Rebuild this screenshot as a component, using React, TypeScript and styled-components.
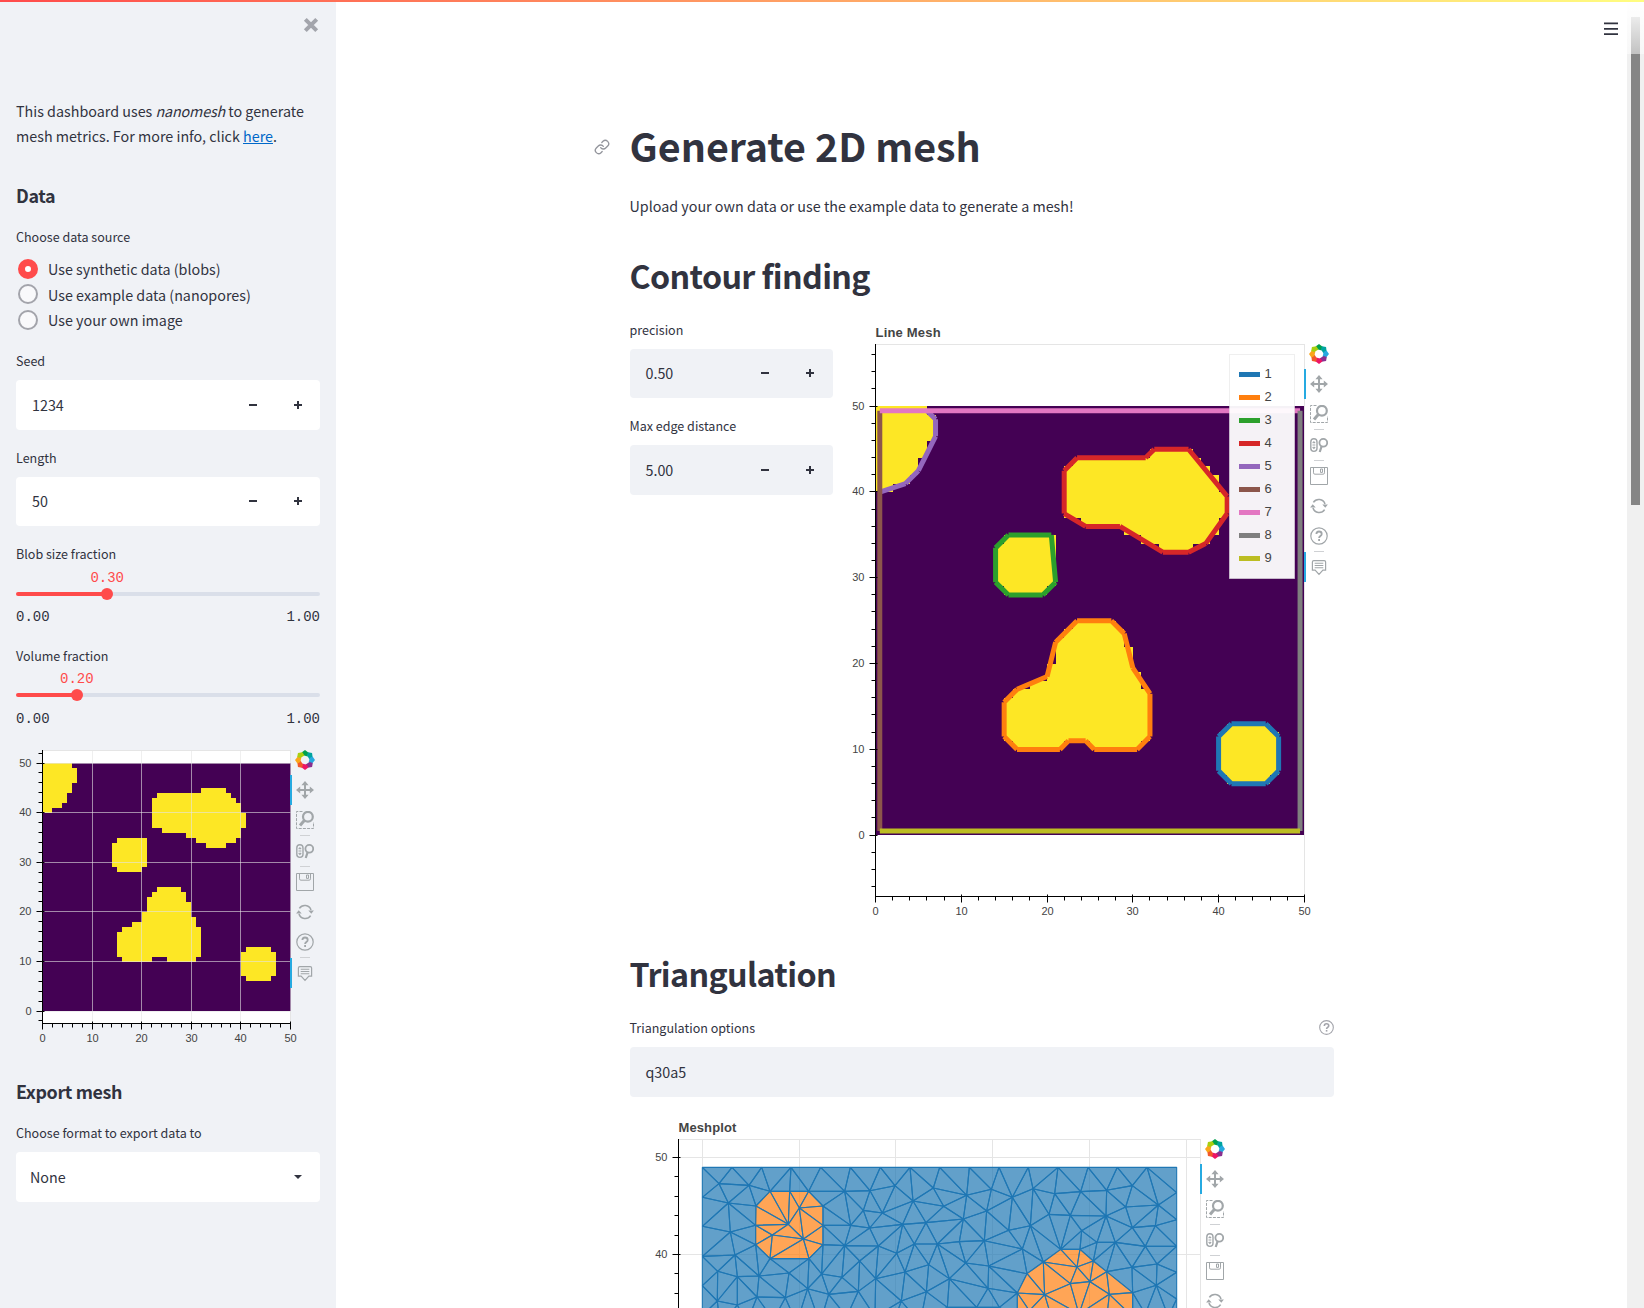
import React from "react";
import styled, { createGlobalStyle } from "styled-components";

const GlobalStyle = createGlobalStyle`
  *, *::before, *::after { box-sizing: border-box; }
  body {
    margin: 0;
    background: #fff;
    color: #31333f;
    font-family: "Noto Sans CJK SC", "Noto Sans", sans-serif;
    font-size: 14.32px;
    line-height: 25px;
  }
`;

const Page = styled.div`
  position: relative;
  display: flex;
  width: 1644px;
  height: 1308px;
  overflow: hidden;
`;

const Decoration = styled.div`
  position: absolute;
  inset: 0 0 auto 0;
  height: 2px;
  z-index: 3;
  background: linear-gradient(90deg, #ff4b4b, #fffd80);
`;

const Sidebar = styled.aside`
  flex: 0 0 336px;
  padding: 17px 16px 0;
  background: #f0f2f6;
`;

const CloseRow = styled.div`
  display: flex;
  justify-content: flex-end;
  height: 81px;
  padding-right: 1px;
`;

const Paragraph = styled.p<{ $gap?: number }>`
  margin: ${(p) => p.$gap ?? 0}px 0 0;
`;

const Line = styled.span`
  display: block;
  white-space: nowrap;
`;

const Link = styled.a`
  color: #0068c9;
  text-decoration: underline;
  text-underline-offset: 1px;
`;

const Emph = styled.em`
  font-style: italic;
  letter-spacing: -0.15px;
`;

const SideHeading = styled.h2<{ $gap: number }>`
  margin: ${(p) => p.$gap}px 0 0;
  font-size: 17.9px;
  line-height: 24px;
  font-weight: 700;
  letter-spacing: -0.38px;
`;

const Label = styled.div<{ $gap: number }>`
  display: flex;
  justify-content: space-between;
  align-items: center;
  margin-top: ${(p) => p.$gap}px;
  height: 20px;
  font-size: 12.54px;
  line-height: 20px;
`;

const RadioGroup = styled.div`
  margin-top: 9.1px;
`;

const RadioRow = styled.label`
  display: flex;
  align-items: center;
  gap: 10px;
  height: 25.5px;
  padding-left: 2px;
`;

const RadioMark = styled.span<{ $on?: boolean }>`
  width: 20px;
  height: 20px;
  border-radius: 50%;
  border: ${(p) => (p.$on ? "7px solid #ff4b4b" : "2px solid #a3a4ab")};
  background: ${(p) => (p.$on ? "#fff" : "#f9f9fb")};
`;

const Control = styled.div<{ $bg: string; $tall?: boolean; $indent?: number }>`
  display: flex;
  align-items: center;
  margin-top: 9px;
  height: ${(p) => (p.$tall ? 50 : 49)}px;
  padding-left: ${(p) => p.$indent ?? 16}px;
  padding-bottom: ${(p) => (p.$tall ? 0 : 1)}px;
  border-radius: 4px;
  background: ${(p) => p.$bg};
`;

const ControlText = styled.span`
  flex: 1;
`;

const StepButton = styled.span`
  display: flex;
  align-items: center;
  justify-content: center;
  width: 45px;
  height: 100%;
`;

const SliderBox = styled.div<{ $lift: number }>`
  height: 62px;
  margin-top: ${(p) => -p.$lift}px;
  padding-top: 4px;
  font-family: "Liberation Mono", monospace;
  font-size: 14px;
  line-height: 20px;
`;

const SliderValue = styled.div`
  width: 34px;
  transform: translateX(-50%);
  text-align: center;
  color: #ff4b4b;
`;

const Track = styled.div`
  display: flex;
  align-items: center;
  height: 12px;
`;

const TrackPart = styled.div<{ $on?: boolean }>`
  height: 4px;
  flex: ${(p) => (p.$on ? "none" : "1")};
  border-radius: ${(p) => (p.$on ? "2px 0 0 2px" : "0 2px 2px 0")};
  background: ${(p) => (p.$on ? "#ff4b4b" : "#dadfe9")};
`;

const Thumb = styled.div`
  width: 12px;
  height: 12px;
  margin: 0 -6px;
  z-index: 1;
  border-radius: 50%;
  background: #ff4b4b;
`;

const SliderEnds = styled.div<{ $gap: number }>`
  display: flex;
  justify-content: space-between;
  margin-top: ${(p) => p.$gap}px;
`;

const Main = styled.main`
  flex: 1;
  display: flex;
  justify-content: center;
`;

const Block = styled.div`
  width: 704px;
  padding-top: 112px;
`;

const TitleRow = styled.div`
  display: flex;
  align-items: center;
  height: 66px;
  margin-left: -36px;
  gap: 20px;
`;

const AnchorIcon = styled.span`
  display: flex;
  padding-top: 3px;
`;

const Title = styled.h1`
  margin: 0;
  font-size: 39.4px;
  line-height: 66px;
  font-weight: 700;
`;

const Heading = styled.h2<{ $gap: number }>`
  margin: ${(p) => p.$gap}px 0 0;
  font-size: 32.25px;
  line-height: 44px;
  font-weight: 700;
  letter-spacing: -0.64px;
`;

const Columns = styled.div`
  display: flex;
  gap: 16.5px;
  height: 626px;
`;

const Column = styled.div<{ $w: number }>`
  flex: none;
  width: ${(p) => p.$w}px;
`;

const PlotRow = styled.div<{ $gap?: number; $indent?: number }>`
  display: flex;
  align-items: flex-start;
  margin-top: ${(p) => p.$gap ?? 0}px;
  padding-left: ${(p) => p.$indent ?? 0}px;
`;

const PlotSvg = styled.svg`
  display: block;
  flex: none;
  overflow: visible;
  font-family: "Liberation Sans", Arial, sans-serif;
  fill: #444;
`;

const Toolbar = styled.div<{ $gap: number }>`
  display: flex;
  flex-direction: column;
  align-items: center;
  width: 30px;
  margin-top: ${(p) => p.$gap}px;
`;

const Tool = styled.span<{ $active?: boolean }>`
  display: flex;
  align-items: center;
  justify-content: center;
  width: 30px;
  height: 30px;
  padding-right: 2px;
  border-left: 2px solid ${(p) => (p.$active ? "#26aae1" : "transparent")};
`;

const Divider = styled.span`
  width: 10px;
  height: 1px;
  background: #cfd1d4;
`;

const Header = styled.header`
  position: absolute;
  top: 0;
  right: 0;
  left: 336px;
  height: 54px;
  z-index: 2;
  display: flex;
  justify-content: flex-end;
  padding: 22px 26px 0 0;
  background: linear-gradient(rgba(255, 255, 255, 1), rgba(255, 255, 255, 0.5));
`;

const ScrollTrack = styled.div`
  flex: 0 0 17px;
  padding: 17px 4px 0;
  background: #f0f0f0;
`;

const ScrollThumb = styled.div`
  height: 488px;
  background: #858585;
`;

/* ---------- icons ---------- */

const GREY = "#a1a6a9";

function BokehLogo() {
  const colors = ["#00a04e", "#00a4a0", "#26a9e0", "#8a2f8f", "#ed1566", "#f2592a", "#faa61a", "#a9cf0f"];
  return (
    <svg width="20" height="20" viewBox="-10 -10 20 20">
      {colors.map((c, i) => (
        <polygon key={c} points="-3.4,-7.6 0,-10 3.6,-7.2 2.8,-3.6 -1.9,-4.7" fill={c} transform={`rotate(${i * 45})`} />
      ))}
    </svg>
  );
}

function PanIcon() {
  return (
    <svg width="18" height="18" viewBox="0 0 18 18" fill={GREY}>
      <path d="M8 4h2v4h4v2h-4v4H8v-4H4V8h4z" />
      <path d="M9 0l3.6 4.2H5.4zM9 18l3.6-4.2H5.4zM0 9l4.2-3.6v7.2zM18 9l-4.2-3.6v7.2z" />
    </svg>
  );
}

function BoxZoomIcon() {
  return (
    <svg width="18" height="18" viewBox="0 0 18 18" fill="none" stroke={GREY}>
      <path d="M6.500 .5H.5v17h17V11" strokeDasharray="3 1.2" />
      <circle cx="11.900" cy="5.800" r="4.900" strokeWidth="2.200" />
      <path d="M8.500 9.300l-4.500 5.200" strokeWidth="3" />
    </svg>
  );
}

function WheelIcon() {
  return (
    <svg width="18" height="18" viewBox="0 0 18 18" fill="none" stroke={GREY} strokeWidth="1.4">
      <rect x=".8" y="2.800" width="6.200" height="12.600" rx="3.100" />
      <path d="M2.700 7.100l1.200-1.300 1.200 1.300M2.700 11l1.200 1.300L5.100 11M2.500 9h2.800" strokeWidth="1.200" />
      <circle cx="13.300" cy="6.800" r="3.900" strokeWidth="1.800" />
      <path d="M11.700 10.200l-2 5.800" strokeWidth="2.200" />
    </svg>
  );
}

function SaveIcon() {
  return (
    <svg width="18" height="18" viewBox="0 0 18 18" fill="none" stroke={GREY}>
      <path d="M.5.5h17v17H.5z" />
      <path d="M3.500 .5v5.300q0 1.400 1.400 1.400h8.200q1.400 0 1.400-1.400V.5" />
      <path d="M10.500 2h2v3.400h-2z" />
    </svg>
  );
}

function ResetIcon() {
  return (
    <svg width="18" height="18" viewBox="0 0 18 18" fill="none" stroke={GREY} strokeWidth="1.6">
      <path d="M3.400 5.400A6.500 6.500 0 0 1 15 7M14.600 12.600A6.500 6.500 0 0 1 3 11" />
      <path d="M12.300 7.400h5.600l-2.600 3.400zM.1 10.600h5.600L2.700 7.200z" fill={GREY} stroke="none" />
    </svg>
  );
}

function HelpIcon({ size = 18, color = GREY, weight = 1.2 }: { size?: number; color?: string; weight?: number }) {
  return (
    <svg width={size} height={size} viewBox="0 0 18 18" fill="none" stroke={color} strokeWidth={weight}>
      <circle cx="9" cy="9" r="8.200" />
      <path d="M6.400 7.100C6.400 5.300 7.500 4.500 9 4.500s2.700 .9 2.700 2.400c0 2-2.600 2.100-2.600 4" strokeWidth={weight + 0.6} />
      <path d="M9.100 12v1.900" strokeWidth={weight + 0.6} />
    </svg>
  );
}

function HoverIcon() {
  return (
    <svg width="18" height="18" viewBox="0 -0.6 18 18" fill="none" stroke={GREY} strokeWidth="1.2">
      <path d="M3.800 2h10.400q1.400 0 1.400 1.400v8.100h-2.700L9 15.800l-3.900-4.300H2.400V3.400Q2.400 2 3.800 2z" />
      <path d="M4.700 4.600h8.600M4.700 6.900h8.600M4.700 9.200h8.600" strokeWidth="1.100" />
    </svg>
  );
}

function LinkIcon() {
  return (
    <svg width="16" height="16" viewBox="0 0 24 24" fill="none" stroke="#93959c" strokeWidth="2" strokeLinecap="round" strokeLinejoin="round">
      <path d="M10 13a5 5 0 0 0 7.540 .54l3-3a5 5 0 0 0-7.070-7.070l-1.720 1.710" />
      <path d="M14 11a5 5 0 0 0-7.540-.54l-3 3a5 5 0 0 0 7.070 7.070l1.710-1.710" />
    </svg>
  );
}

function CloseIcon() {
  return (
    <svg width="16" height="16" viewBox="0 0 16 16" stroke="#a3a5ac" strokeWidth="4">
      <path d="M2.300 2.300l11.400 11.400M13.700 2.300L2.300 13.700" />
    </svg>
  );
}

function BurgerIcon() {
  return (
    <svg width="14" height="13" viewBox="0 0 14 13" fill="#31333f">
      <path d="M0 .6h14v1.700H0zM0 6h14v1.700H0zM0 11.300h14V13H0z" />
    </svg>
  );
}

function Sign({ plus }: { plus?: boolean }) {
  return (
    <svg width="8" height="8" viewBox="0 0 8 8" fill="#31333f">
      <path d={plus ? "M3 0v3H0v2h3v3h2V5h3V3H5V0z" : "M0 3h8v2H0z"} />
    </svg>
  );
}

function BokehToolbar({ gap }: { gap: number }) {
  return (
    <Toolbar $gap={gap}>
      <Tool><BokehLogo /></Tool>
      <Tool $active><PanIcon /></Tool>
      <Tool><BoxZoomIcon /></Tool>
      <Divider />
      <Tool><WheelIcon /></Tool>
      <Divider />
      <Tool><SaveIcon /></Tool>
      <Tool><ResetIcon /></Tool>
      <Tool><HelpIcon /></Tool>
      <Divider />
      <Tool $active><HoverIcon /></Tool>
    </Toolbar>
  );
}

/* ---------- plot data ---------- */

const PURPLE = "#440154";
const YELLOW = "#fde725";

const BLOBS = [
  "0,50 6,50 6,49 7,49 7,46 6,46 6,44 5,44 5,42 4,42 4,41 2,41 2,40 0,40",
  "23,44 32,44 32,45 37,45 37,44 38,44 38,43 39,43 39,42 40,42 40,40 41,40 41,37 40,37 40,35 39,35 39,34 37,34 37,33 33,33 33,34 31,34 31,35 29,35 29,36 24,36 24,37 22,37 22,43 23,43",
  "15,35 21,35 21,29 20,29 20,28 15,28 15,29 14,29 14,34 15,34",
  "23,25 28,25 28,24 29,24 29,22 30,22 30,19 31,19 31,17 32,17 32,11 31,11 31,10 25,10 25,11 22,11 22,10 16,10 16,11 15,11 15,16 16,16 16,17 18,17 18,18 20,18 20,20 21,20 21,23 22,23 22,24 23,24",
  "41,13 46,13 46,12 47,12 47,7 46,7 46,6 41,6 41,7 40,7 40,12 41,12",
];

type Pt = [number, number];

const CONTOURS: { color: string; closed?: boolean; pts: Pt[] }[] = [
  { color: "#1f77b4", closed: true, pts: [[41.5, 13], [45.5, 13], [47, 11.5], [47, 7.5], [45.5, 6], [41.5, 6], [40, 7.5], [40, 11.5]] },
  { color: "#ff7f0e", closed: true, pts: [[23.5, 25], [27.5, 25], [29, 23.5], [30, 19.5], [32, 16.5], [32, 11.5], [30.5, 10], [25.5, 10], [24.5, 11], [22.5, 11], [21.5, 10], [16.5, 10], [15, 11.5], [15, 15.5], [16.5, 17], [20, 18.5], [21, 22.5]] },
  { color: "#2ca02c", closed: true, pts: [[15.5, 35], [20.5, 35], [21, 29.5], [19.5, 28], [15.5, 28], [14, 29.5], [14, 33.5]] },
  { color: "#d62728", closed: true, pts: [[23.5, 44], [31.5, 44], [32.5, 45], [36.5, 45], [41, 39.5], [41, 37.5], [38.5, 34], [36.5, 33], [33.5, 33], [28.5, 36], [24.5, 36], [22, 37.5], [22, 42.5]] },
  { color: "#9467bd", pts: [[6, 49.5], [7, 48.5], [7, 46.5], [5, 42.5], [3.5, 41], [0.5, 40]] },
  { color: "#8c564b", pts: [[0.5, 49.5], [0.5, 0.5]] },
  { color: "#e377c2", pts: [[0.5, 49.5], [49.5, 49.5]] },
  { color: "#7f7f7f", pts: [[49.5, 49.5], [49.5, 0.5]] },
  { color: "#bcbd22", pts: [[0.5, 0.5], [49.5, 0.5]] },
];

/* Mesh nodes in thirds of a pixel from the plot's own origin corner. */
const NODES: Pt[] = [
  [187, 172], [276, 172], [365, 172], [453, 172], [542, 172], [631, 172], [721, 172], [810, 172], [899, 172], [988, 172],
  [1077, 172], [1165, 172], [1254, 172], [1344, 172], [1432, 172], [1521, 172], [1610, 172],
  [187, 262], [187, 349], [187, 439], [187, 527], [187, 616],
  [237, 221], [327, 226], [390, 244], [449, 244], [506, 244], [348, 288], [265, 279], [347, 346], [271, 366], [347, 404],
  [285, 435], [390, 446], [507, 446], [549, 288], [549, 346], [549, 404], [445, 343], [478, 294], [490, 387], [397, 375],
  [614, 244], [690, 242], [765, 227], [880, 234], [670, 301], [727, 309], [819, 273], [911, 289], [632, 346], [689, 354],
  [788, 343], [858, 338], [614, 407], [715, 408], [823, 402], [892, 402], [770, 430], [659, 453], [866, 464], [795, 486],
  [707, 506], [606, 502], [545, 492], [447, 489], [503, 536], [357, 498], [292, 500], [233, 484], [232, 573], [292, 585],
  [351, 561], [436, 563], [566, 553], [655, 544], [784, 573], [859, 545], [928, 506],
  [980, 256], [1054, 238], [1117, 262], [1179, 236], [1244, 251], [1322, 245], [1400, 241], [1477, 227], [1610, 248],
  [1555, 285], [1610, 329], [1457, 291], [1040, 303], [970, 327], [1227, 313], [1291, 316], [1398, 318], [1477, 353],
  [1546, 347], [1171, 347], [1106, 361], [1325, 362], [1033, 392], [958, 395], [1147, 417], [1262, 418], [1320, 418],
  [1371, 397], [1426, 397], [1516, 409], [1610, 409], [1210, 456], [1360, 453], [1311, 471], [977, 459], [1046, 468],
  [1161, 491], [1400, 485], [1476, 472], [1551, 462], [1610, 487], [1044, 535], [1132, 549], [1214, 554],
  [1291, 521], [1350, 515], [1408, 553], [1478, 548], [1549, 526], [1610, 567], [922, 592], [1010, 592], [1078, 592],
  [1132, 625], [1168, 602], [1317, 612], [1478, 620], [1516, 612], [1585, 620], [1610, 648], [1400, 628], [1240, 640],
  [240, 650], [320, 640], [400, 630], [470, 640], [540, 640], [620, 620], [705, 620], [760, 640], [840, 640], [960, 660], [1050, 660],
];

const OCTAGON: Pt[] = [[390, 244], [506, 244], [549, 288], [549, 404], [507, 446], [390, 446], [347, 404], [348, 288]];
const DOME: Pt[] = [[1262, 418], [1320, 418], [1360, 453], [1400, 485], [1478, 548], [1478, 700], [1132, 700], [1132, 549], [1161, 491], [1210, 456]];

function inside(x: number, y: number, poly: Pt[]) {
  let hit = false;
  for (let i = 0, j = poly.length - 1; i < poly.length; j = i++) {
    const [xi, yi] = poly[i];
    const [xj, yj] = poly[j];
    if (yi > y !== yj > y && x < ((xj - xi) * (y - yi)) / (yj - yi) + xi) hit = !hit;
  }
  return hit;
}

const side = (a: Pt, b: Pt, c: Pt) => Math.sign((b[0] - a[0]) * (c[1] - a[1]) - (b[1] - a[1]) * (c[0] - a[0]));

/* Swap the diagonal of the two triangles that a required edge cuts through. */
function forceEdge(tris: Pt[][], a: Pt, b: Pt): Pt[][] {
  const same = (p: Pt, q: Pt) => p[0] === q[0] && p[1] === q[1];
  for (const t of tris) {
    if (!t.some((p) => same(p, a))) continue;
    const [c, d] = t.filter((p) => !same(p, a));
    if (same(c, b) || same(d, b)) continue;
    const other = tris.find((u) => u !== t && [b, c, d].every((q) => u.some((p) => same(p, q))));
    if (!other) continue;
    if (side(a, b, c) * side(a, b, d) < 0 && side(c, d, a) * side(c, d, b) < 0) {
      return [...tris.filter((u) => u !== t && u !== other), [a, b, c], [a, b, d]];
    }
  }
  return tris;
}

/* Bowyer-Watson triangulation. */
function triangulate(pts: Pt[]): Pt[][] {
  const n = pts.length;
  const all: Pt[] = [...pts, [-90000, -80000], [95000, -80000], [900, 120000]];
  type Tri = { v: number[]; cx: number; cy: number; r: number };
  const make = (a: number, b: number, c: number): Tri => {
    const [ax, ay] = all[a];
    const [bx, by] = all[b];
    const [qx, qy] = all[c];
    const d = 2 * (ax * (by - qy) + bx * (qy - ay) + qx * (ay - by)) || 1e-9;
    const cx = ((ax * ax + ay * ay) * (by - qy) + (bx * bx + by * by) * (qy - ay) + (qx * qx + qy * qy) * (ay - by)) / d;
    const cy = ((ax * ax + ay * ay) * (qx - bx) + (bx * bx + by * by) * (ax - qx) + (qx * qx + qy * qy) * (bx - ax)) / d;
    return { v: [a, b, c], cx, cy, r: (ax - cx) ** 2 + (ay - cy) ** 2 };
  };
  let tris: Tri[] = [make(n, n + 1, n + 2)];
  for (let i = 0; i < n; i++) {
    const [x, y] = all[i];
    const edges = new Map<string, number[]>();
    const keep: Tri[] = [];
    tris.forEach((t) => {
      if ((x - t.cx) ** 2 + (y - t.cy) ** 2 < t.r) {
        [[0, 1], [1, 2], [2, 0]].forEach(([p, q]) => {
          const a = Math.min(t.v[p], t.v[q]);
          const b = Math.max(t.v[p], t.v[q]);
          const key = `${a}-${b}`;
          if (edges.has(key)) edges.delete(key);
          else edges.set(key, [a, b]);
        });
      } else keep.push(t);
    });
    edges.forEach(([a, b]) => keep.push(make(a, b, i)));
    tris = keep;
  }
  return tris.filter((t) => t.v.every((k) => k < n)).map((t) => t.v.map((k) => all[k]));
}

const TRIANGLES = [OCTAGON, DOME].reduce(
  (tris, poly) => poly.reduce((acc, p, i) => forceEdge(acc, p, poly[(i + 1) % poly.length]), tris),
  triangulate(NODES),
);

/* ---------- plots ---------- */

const LEFT = 26.5;

interface AxesProps {
  top: number;
  width: number;
  bottom: number;
  zeroX: number;
  zeroY: number;
  unit: number;
  yMin: number;
  yMax: number;
  showX?: boolean;
}

const snap = (v: number) => Math.round(v - 0.5) + 0.5;

function Axes({ top, width, bottom, zeroX, zeroY, unit, yMin, yMax, showX = true }: AxesProps) {
  const ys: number[] = [];
  for (let v = Math.ceil(yMin / 2) * 2; v <= yMax; v += 2) ys.push(v);
  const xs = Array.from({ length: 26 }, (_, i) => i * 2);
  return (
    <g fontSize="11">
      <path d={`M${LEFT} ${top}V${bottom + 0.5}`} stroke="#000" />
      {ys.map((v) => {
        const y = snap(zeroY - v * unit);
        const major = v % 10 === 0;
        return (
          <g key={v}>
            <path d={major ? `M${LEFT - 6} ${y}h8` : `M${LEFT - 4} ${y}h4`} stroke="#000" />
            {major && <text x={LEFT - 11} y={y + 3.5} textAnchor="end">{v}</text>}
          </g>
        );
      })}
      {showX && <path d={`M${LEFT} ${bottom}h${width}`} stroke="#000" />}
      {showX &&
        xs.map((v) => {
          const x = snap(zeroX + v * unit);
          const major = v % 10 === 0;
          return (
            <g key={v}>
              <path d={major ? `M${x} ${bottom - 2}v8` : `M${x} ${bottom}v4`} stroke="#000" />
              {major && <text x={x} y={bottom + 18.5} textAnchor="middle">{v}</text>}
            </g>
          );
        })}
    </g>
  );
}

function Blobs({ zeroX, zeroY, unit }: { zeroX: number; zeroY: number; unit: number }) {
  return (
    <g transform={`translate(${zeroX} ${zeroY}) scale(${unit} ${-unit})`} shapeRendering="crispEdges">
      <rect width="50" height="50" fill={PURPLE} />
      {BLOBS.map((p) => <polygon key={p} points={p} fill={YELLOW} />)}
    </g>
  );
}

function BlobPlot() {
  const unit = 4.96;
  const zeroY = 266;
  const ticks = [0, 10, 20, 30, 40, 50];
  return (
    <PlotRow $gap={18}>
      <PlotSvg width="274" height="310">
        <rect x={LEFT} y="5.500" width="248" height="273" fill="#fff" stroke="#e5e5e5" />
        <Blobs zeroX={LEFT} zeroY={zeroY + 0.2} unit={unit} />
        <g stroke="#e5e5e5" strokeOpacity="0.6">
          {ticks.map((v) => <path key={v} d={`M${snap(LEFT + v * unit)} 5.500v273`} />)}
          {ticks.map((v) => <path key={v} d={`M${LEFT} ${snap(zeroY - v * unit)}h248`} />)}
        </g>
        <Axes top={5} width={248} bottom={278.5} zeroX={LEFT} zeroY={zeroY} unit={unit} yMin={-2.5} yMax={52.5} />
      </PlotSvg>
      <BokehToolbar gap={0} />
    </PlotRow>
  );
}

function LineMeshPlot() {
  const unit = 8.577;
  const zeroY = 515;
  const px = ([x, y]: Pt) => `${LEFT + x * unit} ${zeroY + 0.2 - y * unit}`;
  return (
    <PlotRow $gap={23}>
      <PlotSvg width="455" height="600">
        <text x="26.500" y="17" fontSize="13" fontWeight="bold" letterSpacing="0.2">Line Mesh</text>
        <rect x={LEFT} y="24.500" width="429" height="552" fill="#fff" stroke="#e5e5e5" />
        <Blobs zeroX={LEFT} zeroY={zeroY + 0.2} unit={unit} />
        {CONTOURS.map(({ color, closed, pts }) => {
          const loop = closed ? [...pts, pts[0]] : pts;
          return (
            <path
              key={color}
              d={loop.slice(1).map((p, i) => `M${px(loop[i])}L${px(p)}`).join("")}
              stroke={color}
              strokeWidth="5"
              fill="none"
            />
          );
        })}
        <rect x="380.500" y="34.500" width="65" height="224" fill="#fff" fillOpacity="0.95" stroke="#e5e5e5" strokeOpacity="0.6" />
        {CONTOURS.map(({ color }, i) => (
          <g key={color} fontSize="13">
            <path d={`M390 ${54.5 + i * 23}h21`} stroke={color} strokeWidth="5" />
            <text x="415.500" y={58 + i * 23}>{i + 1}</text>
          </g>
        ))}
        <Axes top={24} width={429} bottom={576.5} zeroX={LEFT} zeroY={zeroY} unit={unit} yMin={-7.1} yMax={57.1} />
      </PlotSvg>
      <BokehToolbar gap={19} />
    </PlotRow>
  );
}

function MeshPlot() {
  const unit = 9.69;
  const y50 = 41.5;
  return (
    <PlotRow $gap={19} $indent={22.5}>
      <PlotSvg width="548" height="192">
        <text x="26.500" y="16" fontSize="13" fontWeight="bold" letterSpacing="0.1">Meshplot</text>
        <rect x={LEFT} y="23.500" width="522" height="600" fill="#fff" stroke="#e5e5e5" />
        <g stroke="#e5e5e5">
          {[0, 1, 2, 3, 4, 5].map((k) => <path key={k} d={`M${snap(50.3 + k * 96.75)} 24V220`} />)}
          {[0, 97].map((d) => <path key={d} d={`M${LEFT} ${y50 + d}h522`} />)}
        </g>
        <g transform="translate(-12 -6) scale(0.33333)" stroke="#1f77b4" strokeWidth="3.300" strokeLinejoin="bevel">
          {TRIANGLES.map((t, i) => {
            const cx = (t[0][0] + t[1][0] + t[2][0]) / 3;
            const cy = (t[0][1] + t[1][1] + t[2][1]) / 3;
            const blob = inside(cx, cy, OCTAGON) || inside(cx, cy, DOME);
            return <polygon key={i} points={t.map((p) => p.join(",")).join(" ")} fill={blob ? "#ff7f0e" : "#1f77b4"} fillOpacity="0.7" />;
          })}
        </g>
        <Axes top={23} width={522} bottom={620} zeroX={50.5} zeroY={y50 + 50 * unit} unit={unit} yMin={32} yMax={51} showX={false} />
      </PlotSvg>
      <BokehToolbar gap={18} />
    </PlotRow>
  );
}

/* ---------- widgets ---------- */

function NumberField({ label, value, gap, bg, tall }: { label: string; value: string; gap: number; bg: string; tall?: boolean }) {
  return (
    <>
      <Label $gap={gap}>{label}</Label>
      <Control $bg={bg} $tall={tall}>
        <ControlText>{value}</ControlText>
        <StepButton><Sign /></StepButton>
        <StepButton><Sign plus /></StepButton>
      </Control>
    </>
  );
}

function Slider({ label, value, gap, lift = 0 }: { label: string; value: number; gap: number; lift?: number }) {
  const at = `${value * 100}%`;
  return (
    <>
      <Label $gap={gap}>{label}</Label>
      <SliderBox $lift={lift}>
        <SliderValue style={{ marginLeft: at }}>{value.toFixed(2)}</SliderValue>
        <Track>
          <TrackPart $on style={{ width: at }} />
          <Thumb />
          <TrackPart />
        </Track>
        <SliderEnds $gap={7 + lift}>
          <span>0.00</span>
          <span>1.00</span>
        </SliderEnds>
      </SliderBox>
    </>
  );
}

export default function App() {
  return (
    <>
      <GlobalStyle />
      <Page>
        <Decoration />
        <Sidebar>
          <CloseRow><CloseIcon /></CloseRow>
          <Paragraph>
            <Line>This dashboard uses <Emph>nanomesh</Emph> to generate</Line>
            <Line>mesh metrics. For more info, click <Link href="#">here</Link>.</Line>
          </Paragraph>
          <SideHeading $gap={35}>Data</SideHeading>
          <Label $gap={20}>Choose data source</Label>
          <RadioGroup>
            <RadioRow><RadioMark $on />Use synthetic data (blobs)</RadioRow>
            <RadioRow><RadioMark />Use example data (nanopores)</RadioRow>
            <RadioRow><RadioMark />Use your own image</RadioRow>
          </RadioGroup>
          <NumberField label="Seed" value="1234" gap={18.4} bg="#fff" tall />
          <NumberField label="Length" value="50" gap={18} bg="#fff" />
          <Slider label="Blob size fraction" value={0.3} gap={18} />
          <Slider label="Volume fraction" value={0.2} gap={20} lift={1} />
          <BlobPlot />
          <SideHeading $gap={24}>Export mesh</SideHeading>
          <Label $gap={20}>Choose format to export data to</Label>
          <Control $bg="#fff" $tall $indent={14}>
            <ControlText>None</ControlText>
            <StepButton>
              <svg width="8" height="4" viewBox="0 0 8 4" fill="#31333f"><path d="M0 0h8L4 4z" /></svg>
            </StepButton>
          </Control>
        </Sidebar>
        <Main>
          <Block>
            <TitleRow>
              <AnchorIcon><LinkIcon /></AnchorIcon>
              <Title>Generate 2D mesh</Title>
            </TitleRow>
            <Paragraph $gap={15.4}>Upload your own data or use the example data to generate a mesh!</Paragraph>
            <Heading $gap={34.6}>Contour finding</Heading>
            <Columns>
              <Column $w={203}>
                <NumberField label="precision" value="0.50" gap={23} bg="#f0f2f6" />
                <NumberField label="Max edge distance" value="5.00" gap={18} bg="#f0f2f6" tall />
              </Column>
              <Column $w={485}>
                <LineMeshPlot />
              </Column>
            </Columns>
            <Heading $gap={28}>Triangulation</Heading>
            <Label $gap={23}>
              Triangulation options
              <HelpIcon size={15} color="#a3a4ab" weight={1.3} />
            </Label>
            <Control $bg="#f0f2f6" $tall>
              <ControlText>q30a5</ControlText>
            </Control>
            <MeshPlot />
          </Block>
        </Main>
        <ScrollTrack><ScrollThumb /></ScrollTrack>
        <Header><BurgerIcon /></Header>
      </Page>
    </>
  );
}
